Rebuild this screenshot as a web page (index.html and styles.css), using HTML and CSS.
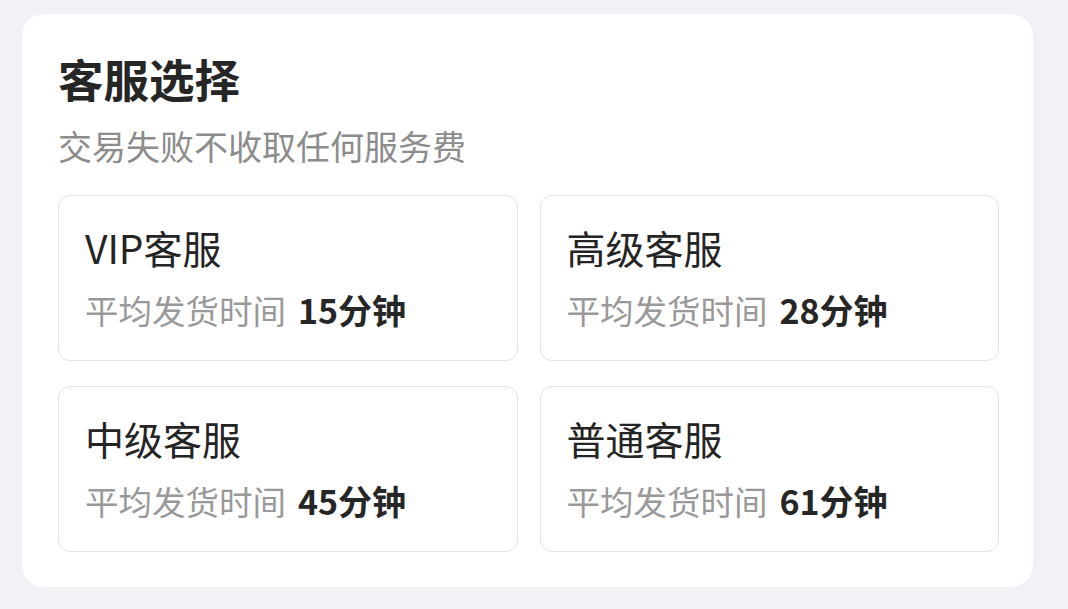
FILE: index.html
```html
<!DOCTYPE html>
<html lang="zh-CN">
<head>
<meta charset="utf-8">
<title>客服选择</title>
<link rel="stylesheet" href="styles.css">
</head>
<body>
  <section class="panel">
    <h1 class="panel-title">客服选择</h1>
    <p class="panel-sub">交易失败不收取任何服务费</p>
    <div class="options">
      <div class="option">
        <div class="option-name">VIP客服</div>
        <div class="option-meta">平均发货时间<b>15分钟</b></div>
      </div>
      <div class="option">
        <div class="option-name">高级客服</div>
        <div class="option-meta">平均发货时间<b>28分钟</b></div>
      </div>
      <div class="option">
        <div class="option-name">中级客服</div>
        <div class="option-meta">平均发货时间<b>45分钟</b></div>
      </div>
      <div class="option">
        <div class="option-name">普通客服</div>
        <div class="option-meta">平均发货时间<b>61分钟</b></div>
      </div>
    </div>
  </section>
</body>
</html>
```
FILE: styles.css
```css
* { box-sizing: border-box; }
html, body { margin: 0; padding: 0; }
body {
  background: #f1f2f6;
  font-family: "Noto Sans CJK SC", "Noto Sans", sans-serif;
  width: 1068px;
  height: 609px;
  padding: 14px 35px 0 22px;
}
.panel {
  background: #ffffff;
  border-radius: 22px;
  padding: 40px 34px 34px 36px;
  height: 573px;
}
.panel-title {
  margin: 0;
  font-size: 45.5px;
  line-height: 48px;
  font-weight: 700;
  color: #262626;
}
.panel-sub {
  margin: 0;
  font-size: 34px;
  line-height: 44px;
  color: #8c8c8c;
  margin-top: 22px;
}
.options {
  margin-top: 27px;
  display: grid;
  grid-template-columns: 1fr 1fr;
  column-gap: 22px;
  row-gap: 25px;
}
.option {
  border: 1.5px solid #e4e4e4;
  border-radius: 12px;
  padding: 26px 20px 24px 26px;
  height: 166px;
}
.option-name {
  font-size: 39px;
  line-height: 50px;
  color: #242424;
}
.option-meta {
  margin-top: 16px;
  font-size: 33.5px;
  line-height: 44px;
  color: #999999;
  white-space: nowrap;
}
.option-meta b {
  margin-left: 12px;
  font-size: 34px;
  color: #262626;
  font-weight: 700;
}
```
